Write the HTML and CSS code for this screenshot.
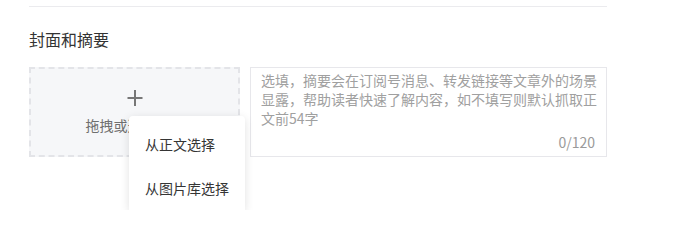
FILE: index.html
```html
<!DOCTYPE html>
<html lang="zh">
<head>
<meta charset="utf-8">
<title>封面和摘要</title>
<link rel="stylesheet" href="styles.css">
</head>
<body>
<div class="panel">
  <h3 class="section-title">封面和摘要</h3>
  <div class="row">
    <div class="cover">
      <svg class="plus" width="16" height="16" viewBox="0 0 16 16" aria-hidden="true">
        <path d="M8 0V16M0.5 8H15.5" stroke="#777" stroke-width="2" fill="none"/>
      </svg>
      <span class="cover-label">拖拽或选择封面</span>
      <ul class="menu">
        <li class="menu-item">从正文选择</li>
        <li class="menu-item">从图片库选择</li>
      </ul>
    </div>
    <div class="digest">
      <div class="placeholder">选填，摘要会在订阅号消息、转发链接等文章外的场景显露，帮助读者快速了解内容，如不填写则默认抓取正文前54字</div>
      <div class="counter">0/120</div>
    </div>
  </div>
</div>
</body>
</html>
```

FILE: styles.css
```css
html {
  overflow: hidden;
}
body {
  margin: 0;
  padding: 0;
  min-height: 210px;
  background: #fff;
  font-family: "Noto Sans CJK SC", "Noto Sans", sans-serif;
  color: #353535;
}
.panel {
  width: 578px;
  margin: 6px 0 0 29px;
  border-top: 1px solid #ebebee;
}
.section-title {
  margin: 20px 0 0;
  font-size: 16px;
  line-height: 24px;
  font-weight: 400;
  color: #333;
}
.row {
  display: flex;
  gap: 10px;
  margin-top: 16px;
}
.cover {
  position: relative;
  box-sizing: border-box;
  width: 211px;
  height: 90px;
  border: 2px dashed #e3e4e8;
  background: #f6f7f9;
  display: flex;
  flex-direction: column;
  align-items: center;
  justify-content: center;
  gap: 9px;
}
.plus {
  display: block;
}
.cover-label {
  font-size: 14px;
  line-height: 20px;
  color: #6f6f6f;
}
.menu {
  position: absolute;
  left: 98px;
  top: 47px;
  width: 116px;
  margin: 0;
  padding: 6px 0 0;
  list-style: none;
  background: #fff;
  border-radius: 4px 4px 0 0;
  box-shadow: 0 2px 10px rgba(0, 0, 0, 0.12);
}
.menu-item {
  padding: 0 16px;
  font-size: 14px;
  line-height: 44px;
  color: #353535;
  white-space: nowrap;
}
.digest {
  box-sizing: border-box;
  width: 357px;
  height: 90px;
  border: 1px solid #e7e7eb;
  padding: 3px 8px 4px 10px;
  display: flex;
  flex-direction: column;
  justify-content: space-between;
}
.placeholder {
  font-size: 14px;
  line-height: 19px;
  color: #a0a0a0;
}
.counter {
  margin-right: 3px;
  text-align: right;
  font-size: 14px;
  line-height: 20px;
  color: #9a9a9a;
}
```
